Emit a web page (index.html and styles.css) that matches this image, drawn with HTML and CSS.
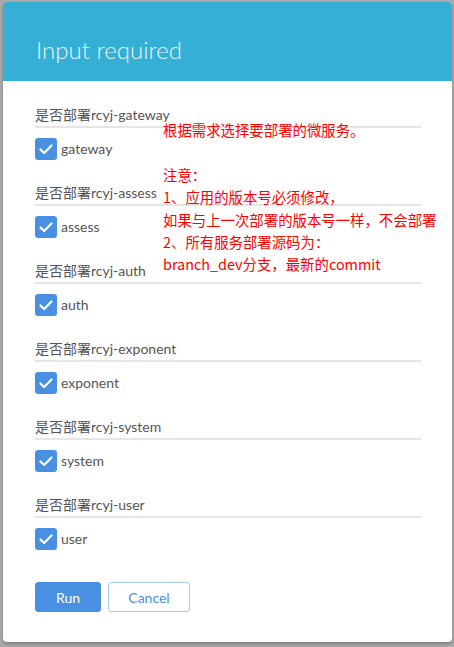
FILE: index.html
```html
<!DOCTYPE html>
<html>
<head>
<meta charset="utf-8">
<link rel="stylesheet" href="styles.css">
</head>
<body>
<div class="modal">
  <div class="modal-header"><h1 class="title">Input required</h1></div>
  <div class="modal-body">
    <div class="field">
      <div class="field-label">是否部署rcyj-gateway</div>
      <label class="check"><span class="box"><svg viewBox="0 0 22 22" width="22" height="22"><path d="M5.5 11.5 L9.2 15 L16.5 7.5" fill="none" stroke="#fff" stroke-width="2.2" stroke-linecap="round" stroke-linejoin="round"/></svg></span><span class="check-text">gateway</span></label>
    </div>
    <div class="field">
      <div class="field-label">是否部署rcyj-assess</div>
      <label class="check"><span class="box"><svg viewBox="0 0 22 22" width="22" height="22"><path d="M5.5 11.5 L9.2 15 L16.5 7.5" fill="none" stroke="#fff" stroke-width="2.2" stroke-linecap="round" stroke-linejoin="round"/></svg></span><span class="check-text">assess</span></label>
    </div>
    <div class="field">
      <div class="field-label">是否部署rcyj-auth</div>
      <label class="check"><span class="box"><svg viewBox="0 0 22 22" width="22" height="22"><path d="M5.5 11.5 L9.2 15 L16.5 7.5" fill="none" stroke="#fff" stroke-width="2.2" stroke-linecap="round" stroke-linejoin="round"/></svg></span><span class="check-text">auth</span></label>
    </div>
    <div class="field">
      <div class="field-label">是否部署rcyj-exponent</div>
      <label class="check"><span class="box"><svg viewBox="0 0 22 22" width="22" height="22"><path d="M5.5 11.5 L9.2 15 L16.5 7.5" fill="none" stroke="#fff" stroke-width="2.2" stroke-linecap="round" stroke-linejoin="round"/></svg></span><span class="check-text">exponent</span></label>
    </div>
    <div class="field">
      <div class="field-label">是否部署rcyj-system</div>
      <label class="check"><span class="box"><svg viewBox="0 0 22 22" width="22" height="22"><path d="M5.5 11.5 L9.2 15 L16.5 7.5" fill="none" stroke="#fff" stroke-width="2.2" stroke-linecap="round" stroke-linejoin="round"/></svg></span><span class="check-text">system</span></label>
    </div>
    <div class="field">
      <div class="field-label">是否部署rcyj-user</div>
      <label class="check"><span class="box"><svg viewBox="0 0 22 22" width="22" height="22"><path d="M5.5 11.5 L9.2 15 L16.5 7.5" fill="none" stroke="#fff" stroke-width="2.2" stroke-linecap="round" stroke-linejoin="round"/></svg></span><span class="check-text">user</span></label>
    </div>
    <div class="actions">
      <button class="btn btn-primary">Run</button>
      <button class="btn btn-outline">Cancel</button>
    </div>
    <div class="note">根据需求选择要部署的微服务。<br><br>注意：<br>1、应用的版本号必须修改，<br>如果与上一次部署的版本号一样，不会部署<br>2、所有服务部署源码为：<br>branch_dev分支，最新的commit</div>
  </div>
</div>
</body>
</html>
```
FILE: styles.css
```css
html, body {
  margin: 0;
  padding: 0;
}
body {
  background: #a9a9a9;
  width: 454px;
  height: 647px;
  overflow: hidden;
  font-family: Lato, "Noto Sans CJK SC", sans-serif;
}
.modal {
  margin: 2px 0 0 3px;
  width: 449px;
  height: 640px;
  background: #fff;
  border-radius: 4px;
  overflow: hidden;
  box-shadow: 0 2px 3px rgba(0,0,0,0.25);
}
.modal-header {
  background: #36afd6;
  height: 79px;
  box-sizing: border-box;
  padding: 33px 0 0 33px;
}
.title {
  margin: 0;
  font-family: Lato, sans-serif;
  font-weight: 300;
  font-size: 24px;
  line-height: 30px;
  color: #e6f5fa;
}
.modal-body {
  position: relative;
  padding: 25px 31px 0 32px;
}
.field {
  margin-bottom: 24px;
}
.field-label {
  font-size: 14px;
  line-height: 18px;
  height: 18px;
  color: #555;
  padding-bottom: 2px;
  border-bottom: 2px solid #e6e6e6;
}
.check {
  margin-top: 10px;
  display: flex;
  align-items: center;
  gap: 4px;
  height: 22px;
}
.box {
  width: 22px;
  height: 22px;
  border-radius: 3px;
  background: #4a90e2;
  display: block;
}
.box svg {
  display: block;
}
.check-text {
  font-size: 14px;
  color: #555;
  line-height: 22px;
}
.actions {
  display: flex;
  gap: 7px;
  margin-top: 32px;
}
.btn {
  height: 30px;
  box-sizing: border-box;
  border-radius: 3px;
  font-family: Lato, sans-serif;
  font-size: 14px;
  padding: 0;
  cursor: pointer;
}
.btn-primary {
  width: 66px;
  background: #4a90e2;
  border: 1px solid #4a90e2;
  color: #fff;
}
.btn-outline {
  width: 82px;
  background: #fff;
  border: 1px solid #a9c9f1;
  color: #4a90e2;
}
.note {
  position: absolute;
  left: 160px;
  top: 38px;
  font-family: "Noto Sans CJK SC", sans-serif;
  font-size: 14.4px;
  line-height: 22.4px;
  color: #ff0000;
  white-space: nowrap;
}
```
